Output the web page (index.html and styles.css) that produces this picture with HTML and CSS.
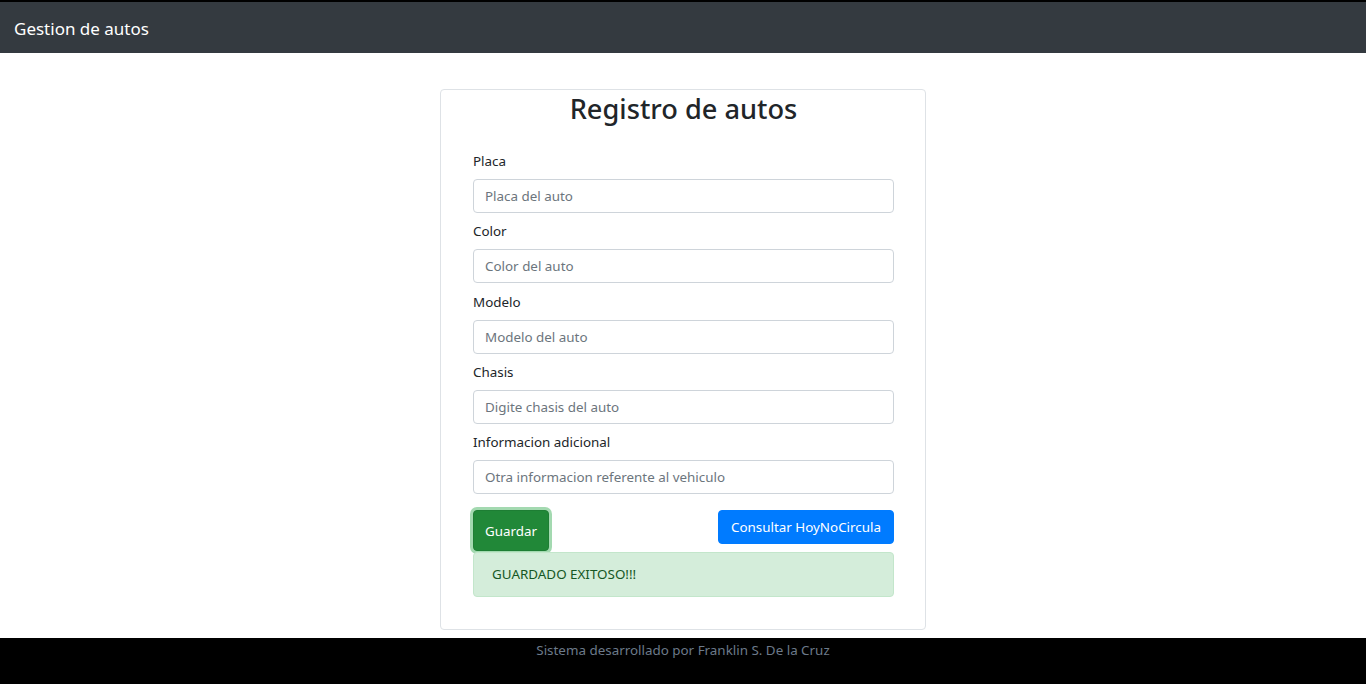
FILE: index.html
```html
<!DOCTYPE html>
<html lang="es">
<head>
<meta charset="utf-8">
<title>Gestion de autos</title>
<link rel="stylesheet" href="styles.css">
</head>
<body>
<nav class="navbar">
  <span class="brand">Gestion de autos</span>
</nav>
<main class="main">
  <section class="card">
    <h2 class="title">Registro de autos</h2>
    <form class="form">
      <div class="group">
        <label class="label">Placa</label>
        <input class="input" type="text" placeholder="Placa del auto">
      </div>
      <div class="group">
        <label class="label">Color</label>
        <input class="input" type="text" placeholder="Color del auto">
      </div>
      <div class="group">
        <label class="label">Modelo</label>
        <input class="input" type="text" placeholder="Modelo del auto">
      </div>
      <div class="group">
        <label class="label">Chasis</label>
        <input class="input" type="text" placeholder="Digite chasis del auto">
      </div>
      <div class="group">
        <label class="label">Informacion adicional</label>
        <input class="input" type="text" placeholder="Otra informacion referente al vehiculo">
      </div>
      <div class="actions">
        <button class="btn btn-save" type="button">Guardar</button>
        <button class="btn btn-query" type="button">Consultar HoyNoCircula</button>
      </div>
      <div class="alert">GUARDADO EXITOSO!!!</div>
    </form>
  </section>
</main>
<footer class="footer">Sistema desarrollado por Franklin S. De la Cruz</footer>
</body>
</html>
```
FILE: styles.css
```css
* { box-sizing: border-box; }
html, body { margin: 0; padding: 0; }
body {
  font-family: "Noto Sans", "Open Sans", sans-serif;
  font-size: 13.4px;
  color: #212529;
  background: #fff;
}
.navbar {
  border-top: 2px solid #000;
  background: #343a40;
  height: 53px;
  display: flex;
  align-items: center;
  padding: 2px 14px 0;
}
.brand {
  color: #fff;
  font-size: 17px;
  line-height: 1;
}
.main {
  display: flex;
  justify-content: center;
  padding: 36px 0 8px;
}
.card {
  width: 486px;
  border: 1px solid #dee2e6;
  border-radius: 4px;
  padding: 0 31px 32px 32px;
}
.title {
  margin: 0;
  text-align: center;
  font-size: 27.2px;
  font-weight: 500;
  line-height: 38px;
  color: #212529;
}
.form {
  margin-top: 22px;
  display: flex;
  flex-direction: column;
}
.group {
  display: flex;
  flex-direction: column;
  margin-bottom: 7.25px;
}
.label {
  padding-top: 1px;
  line-height: 21px;
  margin-bottom: 7px;
}
.input {
  height: 34px;
  border: 1px solid #ced4da;
  border-radius: 4px;
  padding: 0 11px;
  font: inherit;
  color: #495057;
}
.input::placeholder { color: #6c757d; }
.actions {
  margin-top: 9px;
  display: flex;
  justify-content: space-between;
  align-items: flex-start;
}
.btn {
  font: inherit;
  color: #fff;
  border-radius: 4px;
  padding: 0 11px;
  cursor: pointer;
}
.btn-save {
  height: 41px;
  background: #218838;
  border: 1px solid #1e7e34;
  box-shadow: 0 0 0 3px rgba(72, 180, 97, 0.5);
}
.btn-query {
  height: 34px;
  padding: 0 12px;
  background: #007bff;
  border: 1px solid #007bff;
}
.alert {
  margin-top: 1px;
  background: #d4edda;
  border: 1px solid #c3e6cb;
  color: #155724;
  border-radius: 4px;
  padding: 11px 18px;
  line-height: 21px;
}
.footer {
  background: #000;
  color: #6c7a8a;
  height: 46px;
  text-align: center;
  padding-top: 2px;
  line-height: 20px;
}
```
